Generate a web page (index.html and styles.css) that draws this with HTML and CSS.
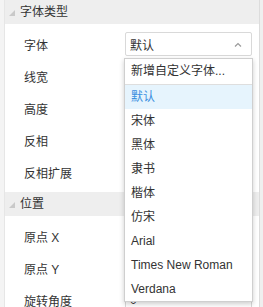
FILE: index.html
```html
<!DOCTYPE html>
<html lang="zh-CN">

<head>
    <meta charset="UTF-8">
    <title>属性面板</title>
    <link rel="stylesheet" href="styles.css">
</head>

<body>
    <div class="frame">
        <div class="panel">
            <div class="section-head">
                <svg class="caret" width="6" height="6" viewBox="0 0 6 6"><polygon points="6,0 6,6 0,6" /></svg>
                <span>字体类型</span>
            </div>
            <div class="section-body">
                <div class="row">
                    <label>字体</label>
                    <div class="control">
                        <div class="select">
                            <span>默认</span>
                            <svg class="chevron" width="8" height="5" viewBox="0 0 8 5"><polyline points="1,4.5 4,1.5 7,4.5" /></svg>
                        </div>
                        <ul class="dropdown">
                            <li class="add">新增自定义字体...</li>
                            <li class="active">默认</li>
                            <li>宋体</li>
                            <li>黑体</li>
                            <li>隶书</li>
                            <li>楷体</li>
                            <li>仿宋</li>
                            <li>Arial</li>
                            <li>Times New Roman</li>
                            <li>Verdana</li>
                        </ul>
                    </div>
                </div>
                <div class="row"><label>线宽</label><div class="control"><div class="input"></div></div></div>
                <div class="row"><label>高度</label><div class="control"><div class="input"></div></div></div>
                <div class="row"><label>反相</label><div class="control"><div class="input"></div></div></div>
                <div class="row"><label>反相扩展</label><div class="control"><div class="input"></div></div></div>
            </div>
            <div class="section-head">
                <svg class="caret" width="6" height="6" viewBox="0 0 6 6"><polygon points="6,0 6,6 0,6" /></svg>
                <span>位置</span>
            </div>
            <div class="section-body">
                <div class="row"><label>原点 X</label><div class="control"><div class="input"></div></div></div>
                <div class="row"><label>原点 Y</label><div class="control"><div class="input"></div></div></div>
                <div class="row"><label>旋转角度</label><div class="control"><div class="input">0</div></div></div>
            </div>
        </div>
        <div class="scroll-edge"></div>
    </div>
</body>

</html>
```

FILE: styles.css
```css
body {
    margin: 0;
    font-family: "Liberation Sans", "Noto Sans CJK SC", sans-serif;
    font-size: 12px;
    color: #333;
    background: #f4f4f4;
    overflow: hidden;
}

.frame {
    display: flex;
    padding-left: 4px;
    height: 307px;
}

.panel {
    width: 254px;
    background: #fff;
    border-left: 1px solid #e6e6e6;
}

.scroll-edge {
    flex: 1;
    border-left: 1px solid #dcdcdc;
    background: #efefef;
}

.section-head {
    display: flex;
    align-items: center;
    height: 24px;
    background: #eeeeee;
    padding-left: 4px;
    line-height: 24px;
}

.caret {
    fill: #c9c9c9;
    margin-right: 5px;
    margin-top: 2px;
}

.section-body {
    padding: 4px 0;
}

.row {
    display: flex;
    align-items: center;
    height: 32px;
}

.row label {
    width: 120px;
    padding-left: 19px;
    box-sizing: border-box;
}

.control {
    position: relative;
    width: 127px;
}

.select,
.input {
    display: flex;
    align-items: center;
    justify-content: space-between;
    height: 24px;
    padding: 0 9px 0 4px;
    border: 1px solid #d9d9d9;
    border-radius: 2px;
    box-sizing: border-box;
}

.chevron {
    fill: none;
    stroke: #9a9a9a;
    stroke-width: 1.2;
}

.dropdown {
    position: absolute;
    top: 26px;
    left: -1px;
    width: 127px;
    margin: 0;
    padding: 0;
    list-style: none;
    background: #fff;
    border: 1px solid #cfcfcf;
    box-shadow: 0 2px 5px rgba(0, 0, 0, 0.2);
    z-index: 10;
}

.dropdown li {
    height: 24px;
    line-height: 24px;
    padding-left: 6px;
    white-space: nowrap;
}

.dropdown .add {
    height: 25px;
    line-height: 25px;
    border-bottom: 1px solid #dedede;
}

.dropdown .active {
    background: #e6f4fd;
    color: #3b8fe0;
}
```
